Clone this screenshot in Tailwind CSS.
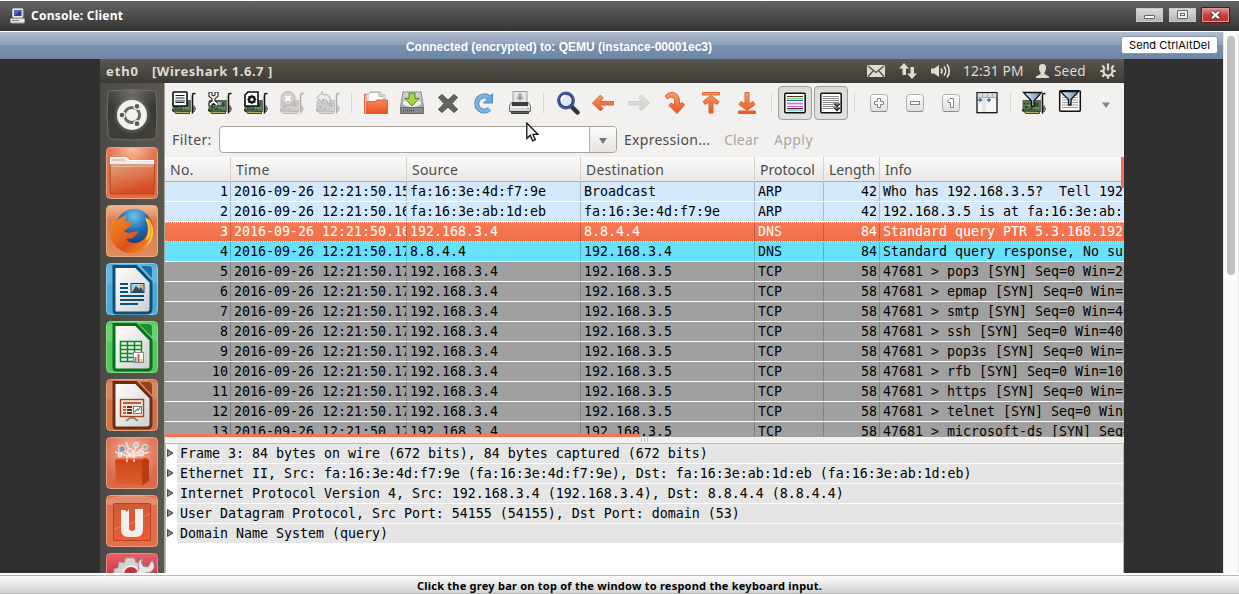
<!DOCTYPE html>
<html lang="en">
<head>
<meta charset="utf-8">
<title>Console: Client</title>
<script src="https://cdn.jsdelivr.net/npm/@tailwindcss/browser@4"></script>
</head>
<body class="w-[1239px] h-[594px] overflow-hidden bg-white flex flex-col font-['Noto_Sans',sans-serif]">

<svg class="absolute w-0 h-0">
  <defs>
    <linearGradient id="or" x1="0" y1="0" x2="0" y2="1"><stop offset="0" stop-color="#f0a56c"/><stop offset="1" stop-color="#ee4f22"/></linearGradient>
    <linearGradient id="gr" x1="0" y1="0" x2="0" y2="1"><stop offset="0" stop-color="#e6e4e2"/><stop offset="1" stop-color="#d2cfcd"/></linearGradient>
    <linearGradient id="key" x1="0" y1="0" x2="0" y2="1"><stop offset="0" stop-color="#ffffff"/><stop offset="1" stop-color="#dddddb"/></linearGradient>
    <linearGradient id="paper" x1="0" y1="0" x2="1" y2="1"><stop offset="0" stop-color="#fff"/><stop offset="1" stop-color="#cfcfcf"/></linearGradient>
    <linearGradient id="funnel" x1="0" y1="0" x2="1" y2="0"><stop offset="0" stop-color="#e8f2fa"/><stop offset="1" stop-color="#5c89b8"/></linearGradient>
    <linearGradient id="disk" x1="0" y1="0" x2="0" y2="1"><stop offset="0" stop-color="#d8d8d8"/><stop offset="1" stop-color="#9a9a9a"/></linearGradient>
    <symbol id="card" viewBox="0 0 24 24">
      <path d="M1 9.500h17.500v11H1z" fill="#55734f" stroke="#3d5237" stroke-width=".8"/>
      <path d="M.5 20v-2l3 4.500h14V20.500z" fill="#b5af66" stroke="#1f2a1a" stroke-width=".8"/>
      <path d="M12.500 11.500h4v4h-4zM3 15h3v2H3zM8 17h2v1.500H8z" fill="#2c4a3c"/>
      <path d="M2 12.500h9M3 18.500h12" stroke="#2f4029" stroke-dasharray="1.500 1.500"/>
      <path d="M5 14.500h5M11 17h6M7 21.500h2M12 21.500h2" stroke="#a3b98c" stroke-dasharray="1.500 1"/>
      <path d="M23.500 2.500h-1.500q-1.500 0-1.500 1.500v18.500" fill="none" stroke="#111" stroke-width="1.500"/>
      <path d="M19.200 5v16" stroke="#9a9a9a" stroke-width=".8"/>
      <path d="M22 14.500v6.500M24 16.500v2.500" stroke="#222" stroke-width="1.200"/>
    </symbol>
    <symbol id="cardoff" viewBox="0 0 24 24">
      <path d="M1 9.500h17.500v11H1z" fill="#d0cfcd" stroke="#bbb9b7" stroke-width=".8"/>
      <path d="M.5 20v-2l3 4.500h14V20.500z" fill="#dcdad7" stroke="#b3b1af" stroke-width=".8"/>
      <path d="M12.500 11.500h4v4h-4zM3 15h3v2H3zM8 17h2v1.500H8z" fill="#bbb9b7"/>
      <path d="M2 12.500h9M3 18.500h12" stroke="#b9b7b5" stroke-dasharray="1.500 1.500"/>
      <path d="M23.500 2.500h-1.500q-1.500 0-1.500 1.500v18.500" fill="none" stroke="#adaba9" stroke-width="1.400"/>
      <path d="M22 14.500v6.500M24 16.500v2.500" stroke="#b4b2b0" stroke-width="1.200"/>
    </symbol>
  </defs>
</svg>

<!-- window title bar -->
<header class="mt-px h-[30px] shrink-0 bg-linear-to-b from-[#646464] to-[#343434] flex items-center pl-[10px] pr-[11px]">
  <svg class="w-4 h-4 -mt-px" viewBox="0 0 16 16"><rect x="2.500" y=".5" width="10.500" height="9" rx="1" fill="#e8e8e8" stroke="#bbb"/><rect x="4" y="2" width="7.500" height="6" fill="#27448f"/><path d="M4 8l7.500-6H4z" fill="#4a6bb5"/><rect x=".5" y="10.500" width="14" height="4.500" rx="1" fill="#dedede" stroke="#a8a8a8"/><path d="M2 12.500h7" stroke="#888"/><path d="M10.500 12.500h3" stroke="#fff"/></svg>
  <h1 class="ml-[5px] text-[12px] leading-4 font-bold text-white tracking-[0.22px]">Console: Client</h1>
  <div class="ml-auto mr-[-1px] flex gap-[6px] -mt-[3px]">
    <button class="w-[27px] h-[14px] border border-[#c9c9c9] bg-linear-to-b from-[#dcdcdc] to-[#b4b4b4] flex justify-center items-center"><svg class="w-[13px] h-[10px]" viewBox="0 0 13 10"><rect x="1.500" y="5.500" width="10" height="3" rx=".5" fill="#fff" stroke="#666"/></svg></button>
    <button class="w-[27px] h-[14px] border border-[#c9c9c9] bg-linear-to-b from-[#dcdcdc] to-[#b4b4b4] flex justify-center items-center"><svg class="w-[13px] h-[10px]" viewBox="0 0 13 10"><rect x="1.500" y=".5" width="10" height="8" rx=".5" fill="#eee" stroke="#666"/><rect x="4.500" y="3.500" width="4" height="2" fill="#fff" stroke="#666"/></svg></button>
    <button class="w-[27px] h-[14px] border border-[#d99] bg-linear-to-b from-[#e08a8a] via-[#c54040] to-[#c03030] outline outline-[#5a1418] flex justify-center items-center"><svg class="w-[13px] h-[10px]" viewBox="0 0 13 10"><path d="M2.500 1.500L10.500 8.500M10.500 1.500L2.500 8.500" stroke="#5a3838" stroke-width="4"/><path d="M3 1.800L10 8.200M10 1.800L3 8.200" stroke="#fff" stroke-width="2.200"/></svg></button>
  </div>
</header>

<div class="mt-px h-[541px] shrink-0 flex">
  <div class="w-[1223px] flex flex-col">
    <!-- connection status -->
    <div class="h-[27px] shrink-0 bg-[linear-gradient(to_bottom,#b0bdcd_0%,#8ea1b8_47%,#7a90ad_50%,#6e86a5_100%)] flex items-center">
      <div class="w-[1118px] pt-[3px] text-center text-[12px] leading-4 font-bold text-white font-['Liberation_Sans',sans-serif]">Connected (encrypted) to: QEMU (instance-00001ec3)</div>
      <button class="ml-[3px] -mt-px w-[97px] h-[18px] rounded-[3px] border border-[#8797ad] bg-white text-black text-[11px] leading-[15px] tracking-[0.1px] font-['Inter',sans-serif]">Send CtrlAltDel</button>
    </div>

    <div class="h-[514px] flex bg-[#303030] pl-[100px]">
      <!-- remote desktop -->
      <div class="w-[1024px] h-full flex flex-col bg-[#f2f1f0]">
        <!-- desktop panel -->
        <div class="h-6 shrink-0 bg-linear-to-b from-[#5b564e] to-[#3c3b37] text-[#dfdbd2] flex items-center pl-[6px] text-[13.5px] leading-5">
          <div class="font-bold w-[46px] text-[13px] tracking-[0.9px]">eth0</div>
          <div class="font-bold text-[13px] tracking-[0.52px] whitespace-pre">[Wireshark 1.6.7 ]</div>
          <div class="ml-auto flex items-center">
            <svg class="w-[18px] h-[12px]" viewBox="0 0 18 12"><rect width="18" height="12" rx="1" fill="#dfdbd2"/><path d="M1 1l8 6.500L17 1M1 11.500L6 6M17 11.500L12 6" fill="none" stroke="#4a4741" stroke-width="1.200"/></svg>
            <svg class="ml-[14px] w-[18px] h-4" viewBox="0 0 18 16"><path d="M5 0L10 5.500H7V12H3.500V5.500H0zM13 16L8 10.500h3.500V4H15v6.500h3z" fill="#dfdbd2"/></svg>
            <svg class="ml-[14px] w-[20px] h-[16px]" viewBox="0 0 20 16"><path d="M0 5.500h3L8 2v12L3 10.500H0z" fill="#dfdbd2"/><path d="M10 5.500a4 4 0 010 5M13 3.500a7 7 0 010 9M16 1.500a10.500 10.500 0 010 13" fill="none" stroke="#dfdbd2" stroke-width="1.700"/></svg>
            <div class="ml-[12px] w-[60px] whitespace-nowrap text-[13.8px] tracking-[0.1px]">12:31 PM</div>
            <svg class="ml-[13px] w-[13px] h-[14px]" viewBox="0 0 13 14"><path d="M6.500 0C9 0 10 1.500 10 4S9 8 8.500 8.500V10l4.500 2.500V14H0v-1.500L4.500 10V8.500C4 8 3 6.500 3 4S4 0 6.500 0z" fill="#dfdbd2"/></svg>
            <div class="ml-[5px] w-[33px] tracking-[0.2px]">Seed</div>
            <svg class="ml-[13px] mr-[8px] w-4 h-4" viewBox="0 0 16 16"><path d="M5 4.500A4.600 4.600 0 1011 4.500" fill="none" stroke="#dfdbd2" stroke-width="2.200"/><path d="M8 .5v7" stroke="#dfdbd2" stroke-width="2.200"/><path d="M2.200 2.500l2 2M13.800 2.500l-2 2M.2 8h3M15.800 8h-3M2.300 13.700l2-2M13.700 13.700l-2-2M8 12.500v3.300" stroke="#dfdbd2" stroke-width="2.200"/></svg>
          </div>
        </div>

        <div class="h-[490px] flex">
          <!-- launcher -->
          <nav class="w-[65px] h-full overflow-hidden border-r border-[#a9a59c] bg-linear-to-r from-[#4b4a44] to-[#5a584f] flex flex-col gap-[6px] pt-[6px] pl-[6px]">
            <svg class="w-[52px] h-[52px] shrink-0" viewBox="0 0 52 52">
              <defs><radialGradient id="l1" cx=".5" cy=".0" r=".9"><stop offset="0" stop-color="#72706a"/><stop offset=".6" stop-color="#3b3a36"/><stop offset="1" stop-color="#3f3e39"/></radialGradient><radialGradient id="gl" cx=".5" cy=".5" r=".5"><stop offset=".5" stop-color="#bbb"/><stop offset="1" stop-color="#bbb" stop-opacity="0"/></radialGradient></defs>
              <path d="M4 2Q26-1 48 2Q50 3 50 6Q52 26 50 47Q50 49 47 50Q26 52 5 50Q2 49 2 46Q0 26 2 5Q2 2 4 2z" fill="url(#l1)" stroke="#75736c" stroke-width=".9"/>
              <circle cx="26" cy="26" r="19" fill="url(#gl)" opacity=".6"/><circle cx="26" cy="26" r="15" fill="#f1f1f0"/>
              <circle cx="26" cy="26" r="7.600" fill="none" stroke="#6a6963" stroke-width="3"/>
              <g stroke="#f1f1f0" stroke-width="1.300" fill="#5b5a55"><circle cx="16" cy="26" r="3"/><circle cx="31" cy="17.300" r="3"/><circle cx="31" cy="34.700" r="3"/></g>
            </svg>
            <svg class="w-[52px] h-[52px] shrink-0" viewBox="0 0 52 52">
              <defs><radialGradient id="l2" cx=".5" cy="0" r="1"><stop offset="0" stop-color="#f9c3a3"/><stop offset=".45" stop-color="#e37450"/><stop offset="1" stop-color="#e06c49"/></radialGradient><linearGradient id="f2" x1="0" y1="0" x2=".4" y2="1"><stop offset="0" stop-color="#d9a27c"/><stop offset=".45" stop-color="#dd7a50"/><stop offset="1" stop-color="#d54a20"/></linearGradient></defs>
              <rect x=".5" y=".5" width="51" height="51" rx="4" fill="url(#l2)" stroke="#f0a27f"/>
              <path d="M4.500 18V10.500h16l3 3H47.500V18z" fill="#eeeae6" stroke="#fff"/><path d="M6 12h12l2 2H6z" fill="#d9c9c0"/>
              <path d="M4 18h44.500l-.5 29H4.500z" fill="url(#f2)" stroke="#b04a26"/><path d="M5 19h42.500" stroke="#ffc9a5"/>
            </svg>
            <svg class="w-[52px] h-[52px] shrink-0" viewBox="0 0 52 52">
              <defs><linearGradient id="l3" x1="0" y1="0" x2="0" y2="1"><stop offset="0" stop-color="#f4b894"/><stop offset=".3" stop-color="#db7d50"/><stop offset="1" stop-color="#e08b60"/></linearGradient><radialGradient id="gb" cx=".5" cy=".2" r=".8"><stop offset="0" stop-color="#6fc4ea"/><stop offset=".5" stop-color="#1e6cb0"/><stop offset="1" stop-color="#143a78"/></radialGradient><linearGradient id="fx" x1="0" y1="0" x2="1" y2="1"><stop offset="0" stop-color="#f39320"/><stop offset=".6" stop-color="#e2501c"/><stop offset="1" stop-color="#f0a82c"/></linearGradient></defs>
              <rect x=".5" y=".5" width="51" height="51" rx="4" fill="url(#l3)" stroke="#efab87"/>
              <circle cx="28" cy="22" r="18" fill="url(#gb)"/>
              <path d="M42 10c5 5 7 13 5 20-2 10-11 18-22 18C13 48 4 38 4 27c0-7 2-11 4-13l2 3c3-4 7-6 11-7-1 2-2 4-1 6l5 2c2 1 1 3-1 4l-6 4c1 2 5 2 9 1l4-1c2 1 1 3-1 4-2 3-6 4-10 4 3 5 12 5 17 1 5-5 7-14 5-25z" fill="url(#fx)"/>
              <path d="M39 13c4 8 4 16 0 23l4-3c0 5-3 8-6 10 7-3 11-10 10-19-1-6-4-11-8-11z" fill="#f6cf3e"/><path d="M43 17c3 7 2 14-1 19" stroke="#e58b22" fill="none"/>
            </svg>
            <svg class="w-[52px] h-[52px] shrink-0" viewBox="0 0 52 52">
              <rect x=".5" y=".5" width="51" height="51" rx="4" fill="#4aaadb" stroke="#8accec"/><path d="M1 4Q26-4 51 4V20Q26 26 1 20z" fill="#fff" opacity=".15"/>
              <path d="M35 3h8q3 0 3 3v9z" fill="#1b6f9f"/>
              <path d="M8 3.500h22L45 19v26q0 5-4 5H10q-2 0-2-3z" fill="url(#paper)" stroke="#0e4f79" stroke-width="3"/>
              <path d="M14 21h8M14 25h8M14 29h8M14 33h24M14 37h24M14 41h18" stroke="#0e4f79" stroke-width="2"/>
              <rect x="25" y="20.500" width="13" height="9" fill="#a5cfe5" stroke="#0e4f79"/><path d="M26 29l4-6 3 3 2-2 3 5z" fill="#444"/><circle cx="35.500" cy="23" r="1.500" fill="#f5a52b"/>
            </svg>
            <svg class="w-[52px] h-[52px] shrink-0" viewBox="0 0 52 52">
              <rect x=".5" y=".5" width="51" height="51" rx="4" fill="#4fc957" stroke="#7de383"/><path d="M1 4Q26-4 51 4V20Q26 26 1 20z" fill="#fff" opacity=".15"/>
              <path d="M33 3h9q4 0 4 4v9z" fill="#1c8f35"/>
              <path d="M8 3.500h22L45 19v26q0 4-4 4H10q-2 0-2-3z" fill="url(#paper)" stroke="#0b6b22" stroke-width="3"/>
              <rect x="14" y="20" width="22" height="20" fill="#e8f6e8"/><path d="M14.500 20.500h21v20h-21zM14 24.500h22M14 28.500h22M14 32.500h22M14 36.500h22M21.500 20v20M28.500 20v20" fill="none" stroke="#12862c" stroke-width="1.500"/>
              <rect x="27.500" y="31.500" width="10" height="10" fill="#fff" stroke="#888"/><path d="M29.500 41v-5" stroke="#2f9bd8" stroke-width="2"/><path d="M32.500 41v-8" stroke="#e0562b" stroke-width="2"/><path d="M35.500 41v-3" stroke="#f5b92b" stroke-width="2"/>
            </svg>
            <svg class="w-[52px] h-[52px] shrink-0" viewBox="0 0 52 52">
              <rect x=".5" y=".5" width="51" height="51" rx="4" fill="#d17347" stroke="#eb9d74"/><path d="M1 4Q26-4 51 4V20Q26 26 1 20z" fill="#fff" opacity=".15"/>
              <path d="M34 3h8q4 0 4 4v9z" fill="#93401d"/>
              <path d="M8 3.500h22L45 19v26q0 4-4 4H10q-2 0-2-3z" fill="url(#paper)" stroke="#6c2f16" stroke-width="3"/>
              <rect x="14.500" y="20.500" width="23" height="17" fill="#f3e6df" stroke="#a5451c" stroke-width="1.400"/><path d="M17 24h18" stroke="#c75a2a" stroke-width="2"/><path d="M17 28h3M17 31h3M17 34h3" stroke="#d9622b" stroke-width="2"/><path d="M21 28h5M21 31h5M21 34h5" stroke="#6c2f16" stroke-width="1.800"/>
              <rect x="27.500" y="27.500" width="8" height="7" fill="#fff" stroke="#777"/><path d="M28.500 33l3-3 1 1 2-3" stroke="#3c9a3c" fill="none" stroke-width="1.200"/><path d="M26 38v2M20 42l4-3h4l4 3" stroke="#8b8b8b" stroke-width="2" fill="none"/>
            </svg>
            <svg class="w-[52px] h-[52px] shrink-0" viewBox="0 0 52 52">
              <defs><radialGradient id="l7" cx=".5" cy=".3" r=".6"><stop offset="0" stop-color="#f3b6a0"/><stop offset="1" stop-color="#da6a4b"/></radialGradient><linearGradient id="bag" x1="0" y1="0" x2="0" y2="1"><stop offset="0" stop-color="#cf4316"/><stop offset="1" stop-color="#dd5f31"/></linearGradient></defs>
              <rect x=".5" y=".5" width="51" height="51" rx="4" fill="url(#l7)" stroke="#ed9d84"/>
              <path d="M26 20L12 8M26 20L20 5M26 20l6-15M26 20l14-12M26 20L9 15M26 20l17-5" stroke="#fff" stroke-width="1.600" opacity=".7"/>
              <g stroke="#f3f0ee" stroke-width="1"><circle cx="16" cy="12" r="3.500" fill="#7d99aa"/><circle cx="30" cy="8" r="2.500" fill="#b9c9cf"/><circle cx="39" cy="10" r="2.500" fill="#97a9b1"/><circle cx="35" cy="16" r="3" fill="#d8d8d8"/><circle cx="24" cy="14" r="2.500" fill="#e3b9a8"/><circle cx="14" cy="18" r="2" fill="#ddd"/></g>
              <path d="M9 22l32-1 2 3v20l-7 4.500L10 46z" fill="url(#bag)"/><path d="M36 22l7 1v21l-7 4.500z" fill="#ba3c12"/><path d="M21 25v-6h7v6" fill="none" stroke="#f7e5dc" stroke-width="1.600"/><path d="M9 22h28" stroke="#e8784b"/>
            </svg>
            <svg class="w-[52px] h-[52px] shrink-0" viewBox="0 0 52 52">
              <defs><linearGradient id="u8" x1="0" y1="0" x2="0" y2="1"><stop offset="0" stop-color="#cf5a39"/><stop offset=".5" stop-color="#dd5a35"/><stop offset="1" stop-color="#ee5a31"/></linearGradient></defs>
              <rect x=".5" y=".5" width="51" height="51" rx="4" fill="#e0704c" stroke="#f19d7f"/><path d="M1 4Q26-4 51 4V10H1z" fill="#fff" opacity=".2"/>
              <rect x="7.500" y="8.500" width="37" height="37" rx="1" fill="url(#u8)" stroke="#b9431f"/><path d="M8 34Q26 30 44 18" stroke="#e98260" fill="none"/>
              <path d="M15 15h4l2 2 2-3v19q0 3 3 3t3-3V14h8v20q0 8-7 8H22q-7 0-7-8z" fill="#f5efec"/>
            </svg>
            <svg class="w-[52px] h-[52px] shrink-0" viewBox="0 0 52 52">
              <defs><linearGradient id="l9" x1="0" y1="0" x2="0" y2=".5"><stop offset="0" stop-color="#e8616a"/><stop offset="1" stop-color="#c92f3c"/></linearGradient></defs>
              <rect x=".5" y=".5" width="51" height="51" rx="4" fill="url(#l9)" stroke="#f0868c"/>
              <path d="M8 24v-8l4-1 1-6 5 1 2-5h8l2 5 4-1 4 6 2 9z" fill="#d5d3d1" stroke="#a7a5a3"/><circle cx="25" cy="21" r="8" fill="#c23440" stroke="#eee" stroke-width="2"/>
              <path d="M37 5q-3 4 0 8l5 1 4-7q4 6 1 10-3 4-8 3l-6 6-5-4 5-6q-3-8 4-11z" fill="#e8e6e4" stroke="#8e8c8a"/>
            </svg>
          </nav>

          <!-- packet analyser -->
          <main class="w-[959px] flex flex-col">
            <!-- main toolbar -->
            <div class="h-10 shrink-0 flex items-center pl-px">
              <div class="flex w-[180px] justify-around">
                <svg class="w-6 h-6" viewBox="0 0 24 24"><use href="#card"/><rect x="1" y="1" width="14" height="14" rx="1" fill="#fff" stroke="#111" stroke-width="1.600"/><path d="M3.500 4.500h9M3.500 7h9M3.500 11.500h9" stroke="#222" stroke-width="1.200"/><rect x="3" y="8.800" width="10" height="2" fill="#6e93b3"/></svg>
                <svg class="w-6 h-6" viewBox="0 0 24 24"><use href="#card"/><path d="M2.500 1v3.500L5.500 7v3.500L2.500 13v2M8.500 1v3.500L5.500 7M5.500 10.500L8.500 13v2" stroke="#111" stroke-width="4" fill="none"/><path d="M2.500 1.500v3L5.500 7v3.500L2.500 13v1.500M8.500 1.500v3L5.500 7M5.500 10.500L8.500 13v1.500" stroke="#fff" stroke-width="2" fill="none"/><path d="M9.500 11h4v3h-4z" fill="#a9a9bd"/></svg>
                <svg class="w-6 h-6" viewBox="0 0 24 24"><use href="#card"/><path d="M4 1h10v14H1V4z" fill="#fff" stroke="#111" stroke-width="1.600"/><circle cx="7.800" cy="8.500" r="3" fill="#ddd" stroke="#111" stroke-width="2"/><path d="M7.800 3.800v9.400M3.200 8.500h9.200M4.500 5.200l6.600 6.600M11 5.200l-6.600 6.600" stroke="#111" stroke-width="1"/><circle cx="7.800" cy="8.500" r="1.500" fill="#fff"/></svg>
                <svg class="w-6 h-6" viewBox="0 0 24 24"><use href="#cardoff"/><circle cx="8" cy="7.500" r="7" fill="#d3cccb" stroke="#bdb5b4"/><path d="M5.500 5l5 5M10.500 5l-5 5" stroke="#fff" stroke-width="2.200"/></svg>
                <svg class="w-6 h-6" viewBox="0 0 24 24"><use href="#cardoff"/><path d="M6.500 1L.8 6.500l5.700 5V8.500q5-.8 5.500 5 4-5 1-8.500Q11 3 6.500 3.500z" fill="#eceae8" stroke="#b3b1af"/></svg>
              </div>
              <div class="w-[12px] h-5 flex justify-center"><span class="w-px h-full bg-[#d6d3d0]"></span></div>
              <div class="flex w-[180px] justify-around">
                <svg class="w-6 h-6" viewBox="0 0 24 24"><path d="M1 3h5V1h11v3h4v8H1z" fill="#fafafa" stroke="#b4b0ac"/><path d="M7 1.500h8l4 4V12H4V3z" fill="#fff" stroke="#b9b5b1"/><path d="M15 1.500v4h4" fill="#ddd" stroke="#b9b5b1"/><path d="M.5 22.500V3.500h1.500v19zM3 10.500h8l2-1.500h10.500v13.500h-21z" fill="url(#or)" stroke="#d84c20" stroke-width=".8"/><path d="M1.500 22.500V4" stroke="#f5b58b"/></svg>
                <svg class="w-6 h-6" viewBox="0 0 24 24"><path d="M3 1h18l2.500 15v6.500H.5V16z" fill="url(#disk)" stroke="#8d8d8d"/><path d="M.8 16.500h22.400v6H.8z" fill="#8b8b8b" stroke="#666"/><path d="M3 19.500h12" stroke="#555" stroke-width="2" stroke-dasharray="1 1"/><ellipse cx="12" cy="12" rx="9" ry="4" fill="#efefef"/><path d="M9 2h6v5.500h4L12 15 5 7.500h4z" fill="#a4d546" stroke="#4f8c17"/></svg>
                <svg class="w-6 h-6" viewBox="0 0 24 24"><path d="M2.500 6.500L6 3.500l6 5.500 6-5.500 3.500 3L16 12.500l5.500 6-3.500 3-6-5.500L6 21.500l-3.500-3L8 12.500z" fill="#666560" stroke="#4c4b47"/></svg>
                <svg class="w-6 h-6" viewBox="0 0 24 24"><path d="M17 6.500A7.600 7.600 0 1017.500 18" fill="none" stroke="#4a8dc4" stroke-width="5"/><path d="M20.500 2.500v9.500h-9l3.200-3z" fill="#68a8dc" stroke="#4a8dc4"/><path d="M17 6.500A7.600 7.600 0 1017.500 18" fill="none" stroke="#7cb5e3" stroke-width="3.200"/></svg>
                <svg class="w-6 h-6" viewBox="0 0 24 24"><path d="M5 .5h14V12H5z" fill="#e6e6e6" stroke="#9b9b9b"/><path d="M10.500 2.500h3V6H16l-4 4-4-4h2.500z" fill="#a0a0a0"/><path d="M3.500 11.500h17l2 3v6h-21v-6z" fill="#d9d9d8" stroke="#6b6b6b"/><path d="M4 11h16v4H4z" fill="#3c3c3c"/><path d="M2 16h20" stroke="#fff"/><path d="M3.500 20.500h17v2h-17z" fill="#666" stroke="#3b3b3b"/><path d="M19 17.500h2" stroke="#6c3" stroke-width="1.400"/></svg>
              </div>
              <div class="w-3 h-5 flex justify-center"><span class="w-px h-full bg-[#d6d3d0]"></span></div>
              <div class="flex w-[216px] justify-around">
                <svg class="w-6 h-6" viewBox="0 0 24 24"><path d="M15.500 15.500l6 6" stroke="#333" stroke-width="4.500" stroke-linecap="round"/><circle cx="10" cy="9.500" r="7.300" fill="#dfe8f3" stroke="#2d4184" stroke-width="3.200"/><circle cx="10" cy="9.500" r="7.800" fill="none" stroke="#5b74b8" stroke-width=".8"/><path d="M5.500 9a4.500 4.500 0 014-4.500" stroke="#fff" stroke-width="2" fill="none"/></svg>
                <svg class="w-6 h-6" viewBox="0 0 24 24"><path d="M9.500 4L1.500 12l8 8 2.500-2.500L8.500 14H22.500v-3.500H8.500L12 7z" fill="url(#or)" stroke="#e0622e"/></svg>
                <svg class="w-6 h-6" viewBox="0 0 24 24"><path d="M14.500 4L22.500 12l-8 8L12 17.500l3.500-3.500H1.500v-3.500h14L12 7z" fill="url(#gr)" stroke="#cfccc9"/></svg>
                <svg class="w-6 h-6" viewBox="0 0 24 24"><path d="M2 5Q4.500 1.500 9 1.500q7.500.5 7.500 9V13l3-1.500 2 2.500-7.500 8.500L6 14.500 8 12l3.500 2q1-7-2.500-8-2.500-.5-4.500 2z" fill="url(#or)" stroke="#e0622e"/></svg>
                <svg class="w-6 h-6" viewBox="0 0 24 24"><path d="M3.500 1.500h17v2.500h-17zM12 4.500l8 6-2 3-4-2.500v11h-4V11l-4 2.500-2-3z" fill="url(#or)" stroke="#e0622e"/></svg>
                <svg class="w-6 h-6" viewBox="0 0 24 24"><path d="M3.500 20h17v2.500h-17zM12 19.500l-8-6 2-3 4 2.500V1.500h4V13l4-2.500 2 3z" fill="url(#or)" stroke="#e0622e"/></svg>
              </div>
              <div class="w-3 h-5 flex justify-center"><span class="w-px h-full bg-[#d6d3d0]"></span></div>
              <div class="flex gap-[2px] w-[71px] pl-px">
                <button class="w-[34px] h-[34px] shrink-0 rounded-[4px] border border-[#a39f9b] bg-[#e3e1df] shadow-inner flex items-center justify-center"><svg class="w-[22px] h-[22px]" viewBox="0 0 22 22"><rect x=".8" y="1.300" width="20.400" height="19.400" rx="1" fill="#fff" stroke="#111" stroke-width="1.500"/><path d="M3 4.500h16" stroke="#7a1f1f"/><path d="M3 6.500h16" stroke="#53e37c" stroke-width="1.500"/><path d="M3 8.500h16" stroke="#1e6a9a"/><path d="M3 11.500h16" stroke="#e06be6" stroke-width="1.800"/><path d="M3 14.500h16" stroke="#c06be0"/><path d="M3 16.500h16" stroke="#722"/><path d="M3 18h16" stroke="#43cfe6" stroke-width="1.400"/></svg></button>
                <button class="w-[34px] h-[34px] shrink-0 rounded-[4px] border border-[#a39f9b] bg-[#e3e1df] shadow-inner flex items-center justify-center"><svg class="w-[22px] h-[22px]" viewBox="0 0 22 22"><rect x=".8" y="1.300" width="20.400" height="19.400" rx="1" fill="#fff" stroke="#111" stroke-width="1.500"/><path d="M3 4.500h16M3 6.500h16M3 8.500h16M3 10.500h16M3 12.500h10M3 14.500h12M3 16.500h10" stroke="#888"/><path d="M13 11.500h8l-4 4zM13 15.500h8l-4 4z" fill="#111"/><path d="M15.500 12.800h3M15.500 16.800h3" stroke="#ccc" stroke-width=".7"/></svg></button>
              </div>
              <div class="w-[13px] h-5 flex justify-center"><span class="w-px h-full bg-[#d6d3d0]"></span></div>
              <div class="flex w-36 justify-around">
                <svg class="w-6 h-6" viewBox="0 0 24 24"><rect x="3.500" y="3.500" width="17" height="17" rx="3" fill="url(#key)" stroke="#b0aeab"/><path d="M4.500 20.500h15" stroke="#8d8b88"/><path d="M10.500 7.500h3v3h3v3h-3v3h-3v-3h-3v-3h3z" fill="#fff" stroke="#858380"/></svg>
                <svg class="w-6 h-6" viewBox="0 0 24 24"><rect x="3.500" y="3.500" width="17" height="17" rx="3" fill="url(#key)" stroke="#b0aeab"/><path d="M4.500 20.500h15" stroke="#8d8b88"/><rect x="7.500" y="10.500" width="9" height="3" fill="#fff" stroke="#858380"/></svg>
                <svg class="w-6 h-6" viewBox="0 0 24 24"><rect x="3.500" y="3.500" width="17" height="17" rx="3" fill="url(#key)" stroke="#b0aeab"/><path d="M4.500 20.500h15" stroke="#8d8b88"/><path d="M11 7.500h3.500v9h-3v-5h-2l-1-1.500z" fill="#fff" stroke="#858380"/></svg>
                <svg class="w-6 h-6" viewBox="0 0 24 24"><rect x="2" y="1.700" width="20" height="20" fill="#f6f6f6" stroke="#111" stroke-width="1.300"/><path d="M2.700 2.400h18.600v4H2.700z" fill="#ddd"/><path d="M7.500 2.500v4M12.500 2.500v4M17.500 2.500v4M3 6.500h18" stroke="#aaa"/><path d="M7 7v14h4V7z" fill="#e4e4e4"/><path d="M2.500 9h3M16 9h-3" stroke="#3c6d95" stroke-width="1.500"/><path d="M4.500 6.500L7.500 9l-3 2.500zM14.500 6.500L11.500 9l3 2.500z" fill="#3c6d95"/></svg>
              </div>
              <div class="w-[11px] h-5 flex justify-center"><span class="w-px h-full bg-[#d6d3d0]"></span></div>
              <div class="flex w-[72px] justify-around">
                <svg class="w-6 h-6" viewBox="0 0 24 24"><use href="#card"/><path d="M1.500 1.500h18L12 10v5.500H9.500V10z" fill="url(#funnel)" stroke="#111" stroke-width="1.300"/></svg>
                <svg class="w-6 h-6 -mt-[2px]" viewBox="0 0 24 24"><rect x="1.700" y="1.700" width="20.600" height="20.600" rx="1" fill="#fff" stroke="#111" stroke-width="1.500"/><path d="M4 6h16M4 8.500h16M4 11h16M4 13.500h16M4 16h16M4 18.500h16" stroke="#999"/><path d="M2.500 2.500h18L13 10.500v5.500h-2.500v-5.500z" fill="url(#funnel)" stroke="#111" stroke-width="1.300"/></svg>
              </div>
              <div class="w-9 flex justify-center"><svg class="w-2 h-[6px] mt-[3px]" viewBox="0 0 8 6"><path d="M0 .5h8L4 6z" fill="#8a8885"/></svg></div>
            </div>

            <!-- display filter -->
            <div class="relative h-[34px] shrink-0 flex items-start pt-[2px] pl-[7px] text-[14px] text-[#4c4c4c]">
              <label class="w-[47px] leading-[30px] tracking-[0.4px]">Filter:</label>
              <div class="w-[398px] h-[27px] mt-px border border-[#aaa39c] rounded-[4px] bg-white flex overflow-hidden">
                <div class="flex-1"></div>
                <div class="w-[27px] h-full border-l border-[#b5afa9] bg-linear-to-b from-[#fbfbfa] to-[#e6e4e2] flex justify-center items-center"><svg class="w-2 h-[6px] mt-[2px]" viewBox="0 0 8 6"><path d="M0 0h8L4 6z" fill="#7a7875"/></svg></div>
              </div>
              <span class="ml-[7px] w-[100px] leading-[30px] tracking-[0.28px]">Expression...</span>
              <span class="w-[50px] leading-[30px] text-[#a9a6a3] tracking-[0.2px]">Clear</span>
              <span class="leading-[30px] text-[#a9a6a3] tracking-[0.4px]">Apply</span>
              <svg class="absolute left-[361px] -top-px w-[13px] h-[20px]" viewBox="0 0 13 20"><path d="M.8 1v15.500l3.500-3.300 2.300 5.600 2.700-1.100-2.300-5.400h4.800z" fill="#fff" stroke="#111" stroke-width="1.300"/></svg>
            </div>

            <!-- packet list -->
            <div class="relative h-[280px] shrink-0 overflow-hidden">
              <div class="h-[25px] grid grid-cols-[66px_176px_174px_174px_69px_56px_244px] bg-linear-to-b from-[#fbfbfa] to-[#e9e7e5] border-b border-[#b0aaa4] text-[14px] leading-[25px] text-[#4c4c4c] whitespace-nowrap">
                <div class="pl-[5px] border-r border-[#d3cfcb] tracking-[0.3px]">No.</div>
                <div class="pl-[5px] border-r border-[#d3cfcb] tracking-[0.3px]">Time</div>
                <div class="pl-[5px] border-r border-[#d3cfcb] tracking-[0.2px]">Source</div>
                <div class="pl-[5px] border-r border-[#d3cfcb] tracking-[0.2px]">Destination</div>
                <div class="pl-[5px] border-r border-[#d3cfcb]">Protocol</div>
                <div class="pl-[5px] border-r border-[#d3cfcb]">Length</div>
                <div class="pl-[5px]">Info</div>
              </div>
              <div id="packets" class="font-['DejaVu_Sans_Mono',monospace] text-[13.29px]"></div>
              <div class="absolute left-0 bottom-0 w-[474px] h-[3px] bg-[#f5744d]"></div>
              <div class="absolute right-0 top-0 w-[3px] h-[31px] bg-[#f5744d]"></div>
            </div>

            <!-- pane divider -->
            <div class="h-[6px] shrink-0 flex justify-center gap-[2px] items-center"><span class="w-px h-1 bg-[#c4c0bb]"></span><span class="w-px h-1 bg-[#c4c0bb]"></span><span class="w-px h-1 bg-[#c4c0bb]"></span></div>

            <!-- packet details -->
            <div id="details" class="flex-1 border-t border-x border-[#c0bab3] bg-white font-['DejaVu_Sans_Mono',monospace] text-[13.29px] text-black"></div>
          </main>
        </div>
      </div>
    </div>
  </div>
  <!-- page scrollbar -->
  <div class="w-4 bg-[#fafafa] border-l border-r border-[#e6e6e6] pt-[4px] flex justify-center items-start"><div class="w-2 h-[239px] rounded-full bg-[#c1c1c1]"></div></div>
</div>

<footer class="mt-[2px] h-[19px] shrink-0 border-y border-[#b8b8b8] bg-linear-to-b from-[#fdfdfd] to-[#d2d2d2] text-center text-[11px] leading-[20px] tracking-[0.24px] font-bold text-black">Click the grey bar on top of the window to respond the keyboard input.</footer>

<script>
const packets = [
  ['.15','fa:16:3e:4d:f7:9e','Broadcast','ARP',42,'Who has 192.168.3.5?  Tell 192','a'],
  ['.16','fa:16:3e:ab:1d:eb','fa:16:3e:4d:f7:9e','ARP',42,'192.168.3.5 is at fa:16:3e:ab:','a'],
  ['.16','192.168.3.4','8.8.4.4','DNS',84,'Standard query PTR 5.3.168.192','s'],
  ['.17','8.8.4.4','192.168.3.4','DNS',84,'Standard query response, No su','d'],
  ...['pop3 [SYN] Seq=0 Win=20','epmap [SYN] Seq=0 Win=','smtp [SYN] Seq=0 Win=40','ssh [SYN] Seq=0 Win=40','pop3s [SYN] Seq=0 Win=','rfb [SYN] Seq=0 Win=10','https [SYN] Seq=0 Win=','telnet [SYN] Seq=0 Win=','microsoft-ds [SYN] Seq=']
    .map(t => ['.17','192.168.3.4','192.168.3.5','TCP',58,'47681 > ' + t,'t'])
];
const tone = {
  a: 'leading-[19px] bg-[#d5e9fd] text-black border-b border-white',
  s: 'leading-[17px] bg-linear-to-b from-[#f9794f] to-[#ed6f4b] text-white border-y border-dotted border-white/80',
  d: 'leading-[19px] bg-[#67e2fd] text-black border-b border-white',
  t: 'leading-[19px] bg-[#a0a0a0] text-black border-b border-white'
};
const cell = 'border-r border-black/20 overflow-hidden pl-[3px]';
document.getElementById('packets').innerHTML = packets.map((p, i) =>
  `<div class="h-5 whitespace-pre grid grid-cols-[66px_176px_174px_174px_69px_56px_244px] ${tone[p[6]]}"><div class="border-r border-black/20 text-right pr-[2px]">${i + 1}</div><div class="${cell}">2016-09-26 12:21:50${p[0]}</div><div class="${cell}">${p[1]}</div><div class="${cell}">${p[2]}</div><div class="${cell}">${p[3]}</div><div class="border-r border-black/20 text-right pr-[2px]">${p[4]}</div><div class="overflow-hidden pl-[3px]">${p[5].replace('>', '&gt;')}</div></div>`).join('');
document.getElementById('details').innerHTML = [
  'Frame 3: 84 bytes on wire (672 bits), 84 bytes captured (672 bits)',
  'Ethernet II, Src: fa:16:3e:4d:f7:9e (fa:16:3e:4d:f7:9e), Dst: fa:16:3e:ab:1d:eb (fa:16:3e:ab:1d:eb)',
  'Internet Protocol Version 4, Src: 192.168.3.4 (192.168.3.4), Dst: 8.8.4.4 (8.8.4.4)',
  'User Datagram Protocol, Src Port: 54155 (54155), Dst Port: domain (53)',
  'Domain Name System (query)'
].map(t => `<div class="h-5 flex"><svg class="w-[11px] h-[19px] shrink-0" viewBox="0 0 11 19"><path d="M1.500 5.500v7l5.500-3.500z" fill="#8a8a8a" stroke="#444"/></svg><div class="flex-1 h-[19px] leading-[20px] pl-[3px] bg-[#e5e5e5] whitespace-pre">${t}</div></div>`).join('');
</script>
</body>
</html>
